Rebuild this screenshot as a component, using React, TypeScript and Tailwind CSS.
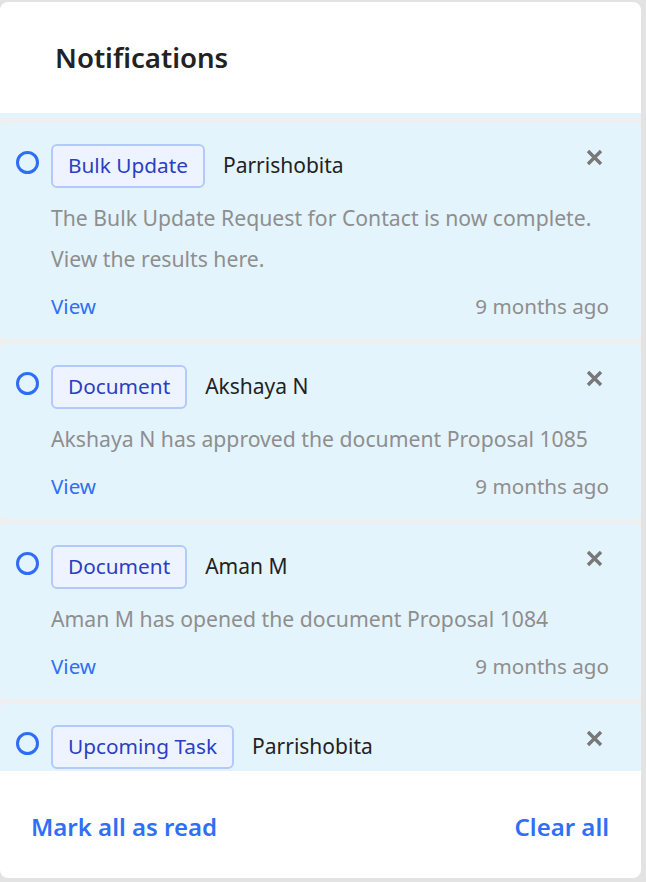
import React from "react";

type Item = {
  tag: string;
  name: string;
  desc: string[];
  time: string;
};

const items: Item[] = [
  {
    tag: "Bulk Update",
    name: "Parrishobita",
    desc: ["The Bulk Update Request for Contact is now complete.", "View the results here."],
    time: "9 months ago",
  },
  {
    tag: "Document",
    name: "Akshaya N",
    desc: ["Akshaya N has approved the document Proposal 1085"],
    time: "9 months ago",
  },
  {
    tag: "Document",
    name: "Aman M",
    desc: ["Aman M has opened the document Proposal 1084"],
    time: "9 months ago",
  },
];

function Close() {
  return (
    <svg width="17" height="17" viewBox="0 0 17 17" className="block">
      <path d="M2 2 L15 15 M15 2 L2 15" stroke="#787878" strokeWidth="3.4" strokeLinecap="butt" />
    </svg>
  );
}

function Header({ tag, name }: { tag: string; name: string }) {
  return (
    <div className="flex items-center h-[44px]">
      <div className="w-[34px] shrink-0 relative top-[-4px] left-[-1px]">
        <div className="w-[23px] h-[23px] rounded-full border-[3.5px] border-[#2f6df6]" />
      </div>
      <div className="h-[44px] px-[15px] flex items-center rounded-[6px] border-2 border-[#b3c9fb] bg-[#eef4ff] text-[#2a3fc4] text-[20.8px]">
        {tag}
      </div>
      <div className="ml-[18px] text-[21px] text-[#222222]">{name}</div>
      <div className="ml-auto mr-[6px] relative top-[-9px]">
        <Close />
      </div>
    </div>
  );
}

function Card({ item }: { item: Item }) {
  return (
    <div className="shrink-0 rounded-[5px] bg-[#e4f4fd] pt-[21px] pb-[19px] pl-[17px] pr-[32px]">
      <Header tag={item.tag} name={item.name} />
      <div className="pl-[34px] mt-[9px] text-[21.2px] leading-[41px] text-[#8e8e8e]">
        {item.desc.map((d, i) => (
          <div key={i}>{d}</div>
        ))}
      </div>
      <div className="pl-[34px] mt-[13px] flex items-center justify-between h-[28px] text-[20.6px]">
        <span className="text-[#2f6ff5]">View</span>
        <span className="text-[#8e8e8e]">{item.time}</span>
      </div>
    </div>
  );
}

export default function App() {
  return (
    <div
      className="w-[646px] h-[882px] bg-[#e3e3e3] pt-[2px] pr-[5px] pb-[4px]"
      style={{ fontFamily: "'Noto Sans', Lato, sans-serif" }}
    >
      <div className="h-full bg-white rounded-[8px] overflow-hidden flex flex-col">
        <div className="h-[111px] shrink-0 flex items-center pl-[55px] pt-[1px]">
          <h1 className="text-[27.6px] font-semibold text-[#222222]">Notifications</h1>
        </div>
        <div className="flex-1 min-h-0 overflow-hidden bg-[#efefef] flex flex-col gap-[5px]">
          <div className="h-[5px] shrink-0 bg-[#e4f4fd]" />
          {items.map((it, i) => (
            <Card key={i} item={it} />
          ))}
          <div className="shrink-0 rounded-t-[5px] bg-[#e4f4fd] pt-[21px] pb-[19px] pl-[17px] pr-[32px]">
            <Header tag="Upcoming Task" name="Parrishobita" />
          </div>
        </div>
        <div className="h-[107px] shrink-0 flex items-center justify-between pl-[31px] pr-[32px] pt-[4px] text-[24px] font-semibold text-[#2f6ff5]">
          <span>Mark all as read</span>
          <span>Clear all</span>
        </div>
      </div>
    </div>
  );
}
